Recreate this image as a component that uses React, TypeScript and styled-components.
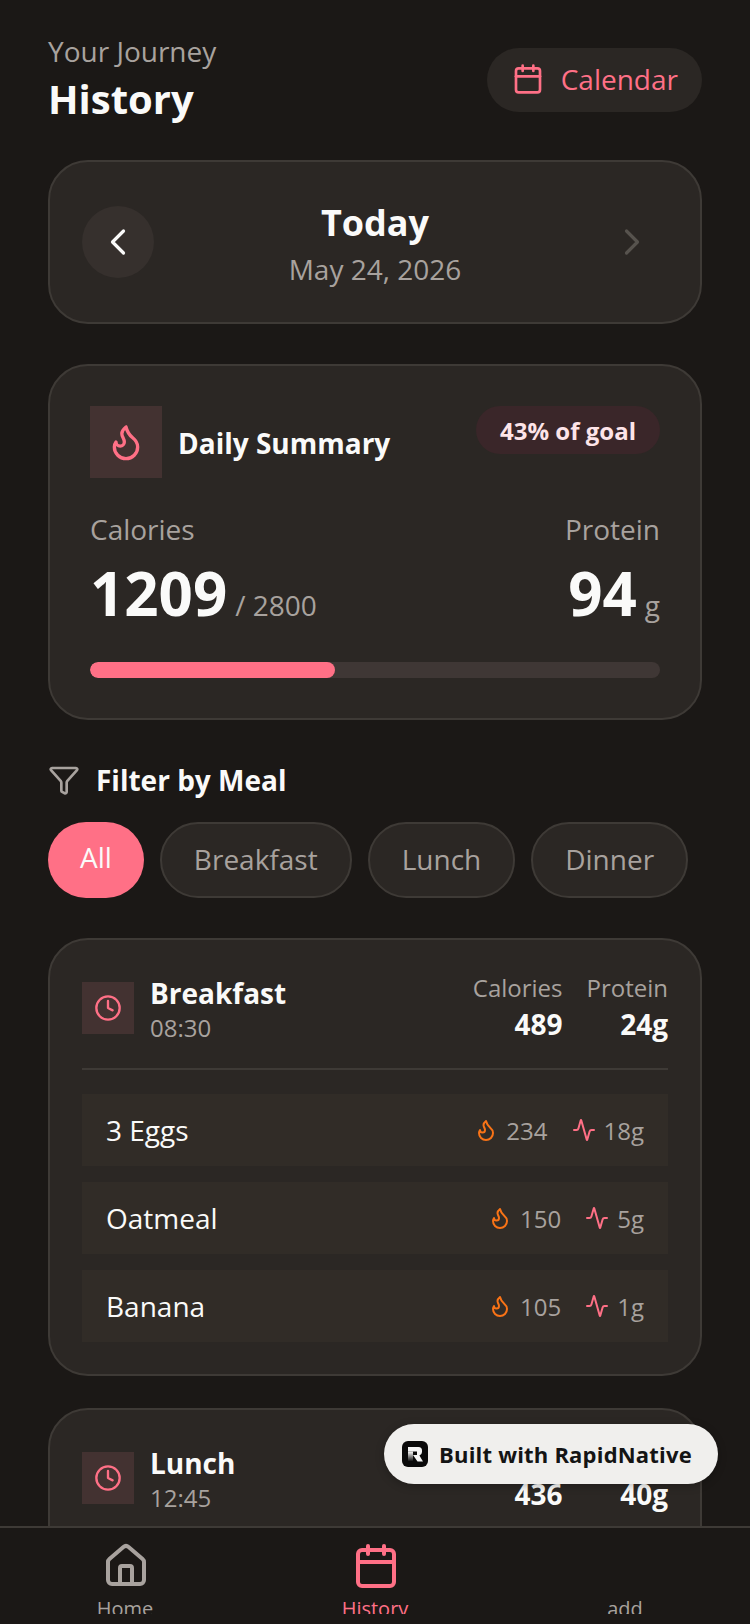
import styled, { createGlobalStyle } from 'styled-components'
import { Activity, Calendar, ChevronLeft, ChevronRight, Clock, Filter, Flame, Home } from 'lucide-react'

const pink = '#ff7086'
const muted = '#a8a29e'
const white = '#fafaf9'
const page = '#1b1816'
const panel = '#2b2724'
const line = '#3e3a36'

const GlobalStyle = createGlobalStyle`
  html, body {
    margin: 0;
    padding: 0;
    background: ${page};
  }
  * {
    box-sizing: border-box;
  }
`

const Screen = styled.div`
  width: 750px;
  height: 1624px;
  display: flex;
  flex-direction: column;
  position: relative;
  overflow: hidden;
  background: ${page};
  font-family: 'Open Sans', 'Noto Sans', sans-serif;
  color: ${white};
`

const Scroll = styled.div`
  flex: 1;
  min-height: 0;
  overflow: hidden;
  padding: 32px 48px 0;
`

const Header = styled.header`
  display: flex;
  justify-content: space-between;
  align-items: center;
  margin-bottom: 34px;
`

const Eyebrow = styled.div`
  font-size: 28px;
  line-height: 38px;
  color: ${muted};
`

const Title = styled.h1`
  margin: 2px 0 0;
  font-size: 40px;
  line-height: 54px;
  font-weight: 700;
`

const CalendarPill = styled.div`
  height: 64px;
  margin-top: 2px;
  padding: 0 24px 2px 25px;
  border-radius: 32px;
  background: ${panel};
  display: flex;
  align-items: center;
  gap: 17px;
  color: ${pink};
  font-size: 28px;
`

const Card = styled.section<{ $pad?: number; $gap?: number }>`
  background: ${panel};
  border: 2px solid ${line};
  border-radius: 40px;
  padding: ${p => p.$pad ?? 32}px;
  margin-bottom: ${p => p.$gap ?? 40}px;
`

const DateCard = styled(Card)`
  display: flex;
  align-items: center;
  justify-content: space-between;
  height: 164px;
`

const RoundButton = styled.div<{ $active?: boolean }>`
  width: 72px;
  height: 72px;
  border-radius: 50%;
  display: flex;
  align-items: center;
  justify-content: center;
  background: ${p => (p.$active ? '#36302d' : 'transparent')};
  color: ${p => (p.$active ? white : '#57534e')};
`

const DateText = styled.div`
  text-align: center;
  padding-top: 3px;
`

const DateTitle = styled.div`
  font-size: 36px;
  line-height: 48px;
  font-weight: 700;
`

const DateSub = styled.div`
  font-size: 28px;
  line-height: 40px;
  margin-top: 2px;
  color: ${muted};
`

const SummaryTop = styled.div`
  display: flex;
  justify-content: space-between;
  align-items: flex-start;
  margin-bottom: 31px;
`

const SummaryLeft = styled.div`
  display: flex;
  align-items: center;
  gap: 16px;
`

const IconSquare = styled.div<{ $size: number }>`
  width: ${p => p.$size}px;
  height: ${p => p.$size}px;
  flex: none;
  display: flex;
  align-items: center;
  justify-content: center;
  background: #433231;
  color: ${pink};
`

const SummaryTitle = styled.div`
  font-size: 28px;
  line-height: 40px;
  padding-top: 2px;
  font-weight: 700;
`

const GoalBadge = styled.div`
  height: 48px;
  padding: 0 24px;
  border-radius: 24px;
  background: #3a2629;
  display: flex;
  align-items: center;
  font-size: 24px;
  font-weight: 700;
  color: #fde4e8;
`

const Totals = styled.div`
  display: flex;
  justify-content: space-between;
  margin-bottom: 28px;
`

const TotalCol = styled.div<{ $right?: boolean }>`
  text-align: ${p => (p.$right ? 'right' : 'left')};
`

const TotalLabel = styled.div`
  font-size: 28px;
  line-height: 40px;
  color: ${muted};
`

const TotalValue = styled.div`
  font-size: 60px;
  line-height: 82px;
  font-weight: 700;
  margin-top: 3px;
`

const TotalUnit = styled.span`
  font-size: 28px;
  line-height: 1;
  font-weight: 400;
  color: ${muted};
  margin-left: 8px;
`

const Track = styled.div`
  height: 16px;
  border-radius: 8px;
  background: #3f3735;
  overflow: hidden;
`

const Fill = styled.div`
  height: 100%;
  border-radius: 8px;
  background: ${pink};
`

const FilterHead = styled.div`
  display: flex;
  align-items: center;
  gap: 16px;
  margin-bottom: 22px;
  font-size: 28px;
  line-height: 40px;
  font-weight: 700;
  svg {
    color: ${muted};
  }
`

const Chips = styled.div`
  display: flex;
  align-items: stretch;
  gap: 16px;
  margin-bottom: 40px;
`

const Chip = styled.div<{ $active?: boolean }>`
  height: 76px;
  padding: ${p => (p.$active ? '0 32px 6px' : '0 32px 2px')};
  border-radius: 38px;
  display: flex;
  align-items: center;
  font-size: 28px;
  background: ${p => (p.$active ? pink : panel)};
  border: ${p => (p.$active ? 'none' : `2px solid ${line}`)};
  color: ${p => (p.$active ? white : muted)};
`

const MealHead = styled.div`
  display: flex;
  justify-content: space-between;
  align-items: center;
  padding-bottom: 24px;
  margin-bottom: 24px;
  border-bottom: 2px solid ${line};
`

const MealLeft = styled.div`
  display: flex;
  align-items: center;
  gap: 16px;
`

const MealName = styled.div`
  font-size: 28px;
  line-height: 37px;
  padding-top: 2px;
  font-weight: 700;
`

const MealTime = styled.div`
  font-size: 24px;
  line-height: 32px;
  color: ${muted};
`

const MealStats = styled.div`
  display: flex;
  gap: 24px;
  text-align: right;
`

const StatLabel = styled.div`
  font-size: 24px;
  line-height: 32px;
  color: ${muted};
`

const StatValue = styled.div`
  font-size: 28px;
  line-height: 40px;
  font-weight: 700;
`

const Items = styled.div`
  display: flex;
  flex-direction: column;
  gap: 16px;
`

const ItemRow = styled.div`
  height: 72px;
  padding: 0 24px;
  background: #312c27;
  display: flex;
  align-items: center;
  justify-content: space-between;
  font-size: 28px;
`

const ItemMacros = styled.div`
  display: flex;
  align-items: center;
  gap: 24px;
  font-size: 24px;
  color: ${muted};
`

const Macro = styled.div`
  display: flex;
  align-items: center;
  gap: 8px;
`

const FlameIcon = styled(Flame)`
  color: #f97316;
`

const PulseIcon = styled(Activity)`
  color: ${pink};
`

const TabBar = styled.nav`
  flex: none;
  height: 98px;
  border-top: 2px solid ${line};
  background: ${page};
  display: flex;
  align-items: flex-start;
  overflow: hidden;
`

const Tab = styled.div<{ $active?: boolean }>`
  flex: 1;
  height: 86px;
  overflow: hidden;
  display: flex;
  flex-direction: column;
  align-items: center;
  justify-content: flex-end;
  color: ${p => (p.$active ? pink : muted)};
  svg {
    margin-left: 2px;
  }
`

const TabLabel = styled.div`
  font-size: 20px;
  line-height: 28px;
  margin-top: 5px;
  height: 19px;
  flex: none;
`

const BuiltBadge = styled.div`
  position: absolute;
  left: 384px;
  top: 1424px;
  width: 334px;
  height: 60px;
  border-radius: 30px;
  background: #f0efed;
  display: flex;
  align-items: center;
  gap: 11px;
  padding-left: 18px;
  color: #141414;
  font-size: 22px;
  font-weight: 700;
  letter-spacing: 0.2px;
  box-shadow: 0 2px 8px rgba(0, 0, 0, 0.25);
`

const BadgeLogo = styled.svg`
  width: 26px;
  height: 26px;
  flex: none;
`

const foods = [
  { name: '3 Eggs', cal: 234, protein: '18g' },
  { name: 'Oatmeal', cal: 150, protein: '5g' },
  { name: 'Banana', cal: 105, protein: '1g' },
]

const MealHeader = ({ name, time, cal, protein }: { name: string; time: string; cal: number; protein: string }) => (
  <MealHead>
    <MealLeft>
      <IconSquare $size={52}>
        <Clock size={28} strokeWidth={2} />
      </IconSquare>
      <div>
        <MealName>{name}</MealName>
        <MealTime>{time}</MealTime>
      </div>
    </MealLeft>
    <MealStats>
      <div>
        <StatLabel>Calories</StatLabel>
        <StatValue>{cal}</StatValue>
      </div>
      <div>
        <StatLabel>Protein</StatLabel>
        <StatValue>{protein}</StatValue>
      </div>
    </MealStats>
  </MealHead>
)

const App = () => (
  <Screen>
    <GlobalStyle />
    <Scroll>
      <Header>
        <div>
          <Eyebrow>Your Journey</Eyebrow>
          <Title>History</Title>
        </div>
        <CalendarPill>
          <Calendar size={32} />
          Calendar
        </CalendarPill>
      </Header>

      <DateCard>
        <RoundButton $active>
          <ChevronLeft size={44} strokeWidth={1.75} />
        </RoundButton>
        <DateText>
          <DateTitle>Today</DateTitle>
          <DateSub>May 24, 2026</DateSub>
        </DateText>
        <RoundButton>
          <ChevronRight size={44} strokeWidth={1.75} />
        </RoundButton>
      </DateCard>

      <Card $pad={40}>
        <SummaryTop>
          <SummaryLeft>
            <IconSquare $size={72}>
              <Flame size={40} />
            </IconSquare>
            <SummaryTitle>Daily Summary</SummaryTitle>
          </SummaryLeft>
          <GoalBadge>43% of goal</GoalBadge>
        </SummaryTop>
        <Totals>
          <TotalCol>
            <TotalLabel>Calories</TotalLabel>
            <TotalValue>
              1209<TotalUnit>/ 2800</TotalUnit>
            </TotalValue>
          </TotalCol>
          <TotalCol $right>
            <TotalLabel>Protein</TotalLabel>
            <TotalValue>
              94<TotalUnit>g</TotalUnit>
            </TotalValue>
          </TotalCol>
        </Totals>
        <Track>
          <Fill style={{ width: '43%' }} />
        </Track>
      </Card>

      <FilterHead>
        <Filter size={32} strokeWidth={2} />
        Filter by Meal
      </FilterHead>
      <Chips>
        <Chip $active>All</Chip>
        <Chip>Breakfast</Chip>
        <Chip>Lunch</Chip>
        <Chip>Dinner</Chip>
      </Chips>

      <Card $gap={32}>
        <MealHeader name="Breakfast" time="08:30" cal={489} protein="24g" />
        <Items>
          {foods.map(f => (
            <ItemRow key={f.name}>
              {f.name}
              <ItemMacros>
                <Macro>
                  <FlameIcon size={24} />
                  {f.cal}
                </Macro>
                <Macro>
                  <PulseIcon size={24} />
                  {f.protein}
                </Macro>
              </ItemMacros>
            </ItemRow>
          ))}
        </Items>
      </Card>

      <Card>
        <MealHeader name="Lunch" time="12:45" cal={436} protein="40g" />
      </Card>
    </Scroll>

    <TabBar>
      <Tab>
        <Home size={48} />
        <TabLabel>Home</TabLabel>
      </Tab>
      <Tab $active>
        <Calendar size={48} />
        <TabLabel>History</TabLabel>
      </Tab>
      <Tab>
        <TabLabel>add</TabLabel>
      </Tab>
    </TabBar>

    <BuiltBadge>
      <BadgeLogo viewBox="0 0 26 26">
        <defs>
          <linearGradient id="rStem" x1="0" y1="0" x2="0" y2="1">
            <stop offset="0" stopColor="#ffffff" />
            <stop offset="1" stopColor="#0a0a0a" />
          </linearGradient>
        </defs>
        <rect width="26" height="26" rx="6" fill="#0a0a0a" />
        <path d="M6 6h10.5a3.5 3.5 0 0 1 3.5 3.5v1.5a3.5 3.5 0 0 1-2.6 3.4L21 20.5h-5.5l-4.5-6.5h4v-3.5H6z" fill="#f5f5f5" />
        <path d="M6 10.5h5v10H6z" fill="url(#rStem)" />
      </BadgeLogo>
      Built with RapidNative
    </BuiltBadge>
  </Screen>
)

export default App
